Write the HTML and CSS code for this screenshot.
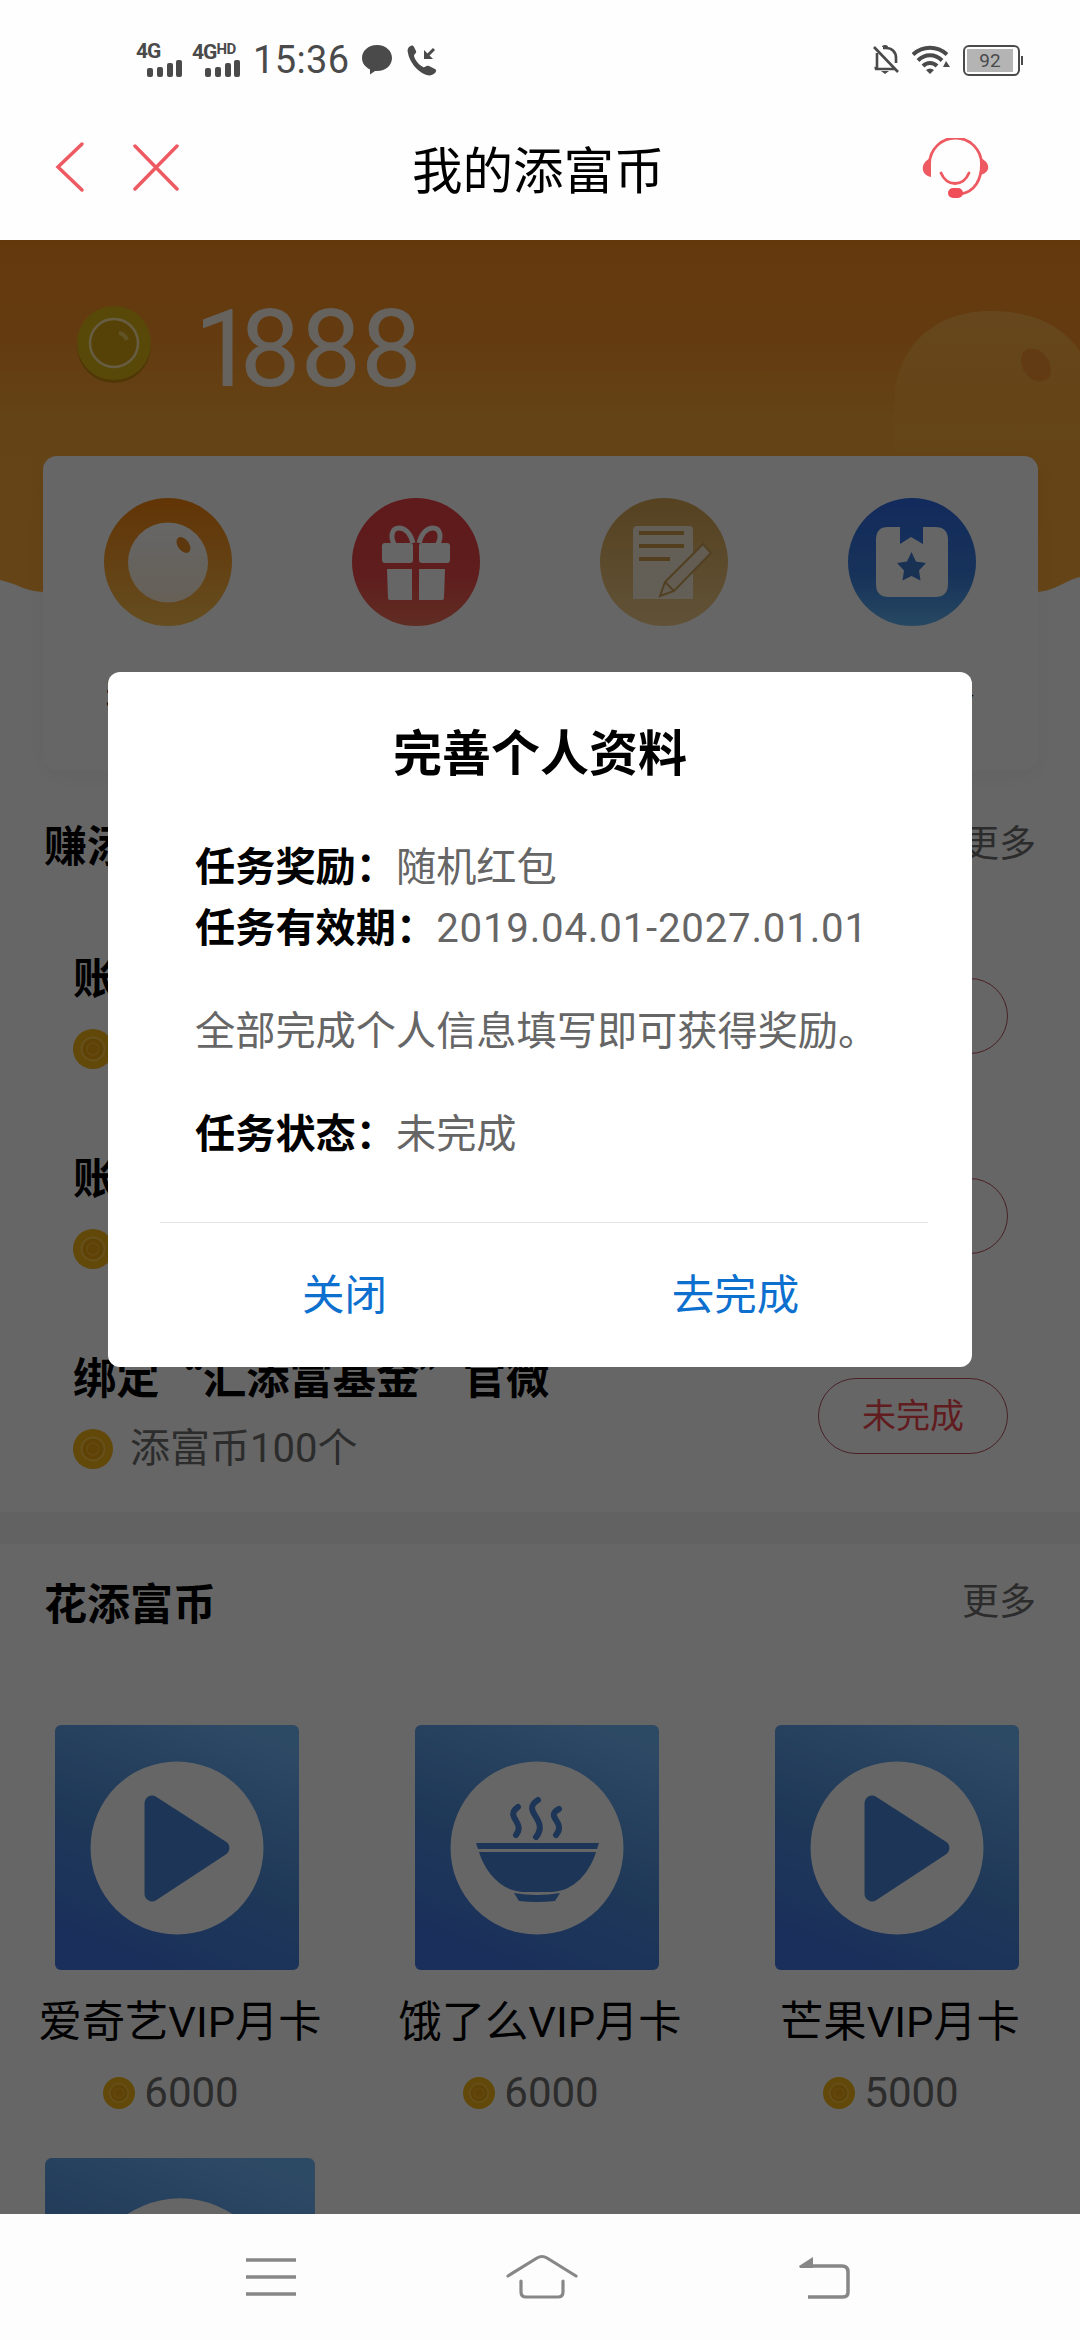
FILE: index.html
```html
<!DOCTYPE html>
<html lang="zh-CN">
<head>
<meta charset="utf-8">
<title>我的添富币</title>
<link rel="stylesheet" href="styles.css">
</head>
<body>
<svg class="defs" width="0" height="0" aria-hidden="true">
  <defs>
    <linearGradient id="tileFill" x1="0.75" y1="0" x2="0.35" y2="1">
      <stop offset="0" stop-color="#72b8fc"/><stop offset="0.5" stop-color="#5090dc"/><stop offset="1" stop-color="#4176e4"/>
    </linearGradient>
    <linearGradient id="orangeFill" x1="0" y1="0" x2="0" y2="1">
      <stop offset="0" stop-color="#f58410"/><stop offset="1" stop-color="#fcc050"/>
    </linearGradient>
    <linearGradient id="redFill" x1="0" y1="0" x2="0" y2="1">
      <stop offset="0" stop-color="#ee4147"/><stop offset="0.6" stop-color="#ee4a49"/><stop offset="1" stop-color="#f0705a"/>
    </linearGradient>
    <linearGradient id="sandFill" x1="0" y1="0" x2="0" y2="1">
      <stop offset="0" stop-color="#d6a552"/><stop offset="1" stop-color="#f2cc8a"/>
    </linearGradient>
    <linearGradient id="blueFill" x1="0" y1="0" x2="0" y2="1">
      <stop offset="0" stop-color="#2f6be6"/><stop offset="0.6" stop-color="#3a7fe0"/><stop offset="1" stop-color="#62b4f5"/>
    </linearGradient>
    <linearGradient id="ballFill" x1="0" y1="0" x2="0" y2="1">
      <stop offset="0" stop-color="#fff"/><stop offset="1" stop-color="#fff0d8"/>
    </linearGradient>
    <linearGradient id="cloudFill" x1="0" y1="0" x2="0" y2="1">
      <stop offset="0" stop-color="#ffb850" stop-opacity="0.85"/><stop offset="0.6" stop-color="#ffb848" stop-opacity="0"/>
    </linearGradient>
    <symbol id="coin" viewBox="0 0 40 40">
      <circle cx="20" cy="20" r="20" fill="#f5b417"/>
      <circle cx="20" cy="20" r="11.5" fill="#eca50f" stroke="#ffc845" stroke-width="2"/>
      <circle cx="20" cy="20" r="6" fill="none" stroke="#f8b92c" stroke-width="1.5"/>
    </symbol>
    <symbol id="play" viewBox="0 0 244 245">
      <rect width="244" height="245" rx="6" fill="url(#tileFill)"/>
      <circle cx="122" cy="123" r="86.5" fill="#fff"/>
      <path d="M97 78 L167 123 L97 169 Z" fill="url(#tileFill)" stroke="#4a86d6" stroke-width="0"/>
      <path d="M97 78 L167 123 L97 169 Z" fill="#4a86d6" stroke="#4a86d6" stroke-width="15" stroke-linejoin="round"/>
    </symbol>
    <symbol id="bowl" viewBox="0 0 244 245">
      <rect width="244" height="245" rx="6" fill="url(#tileFill)"/>
      <circle cx="122" cy="123" r="86.500" fill="#fff"/>
      <g fill="#4a86d6">
        <path d="M61 118h123l-2 6H63z"/>
        <path d="M64 127h117c-6 20-22 39-44 40h-29c-22-1-38-20-44-40z"/>
        <path d="M99 168q23 4 46 0l-5 8q-18 2-36 0z"/>
      </g>
      <g fill="none" stroke="#4a86d6" stroke-width="6" stroke-linecap="round">
        <path d="M103 82c-14 10 8 15-2 28"/>
        <path d="M123 75c-18 11 12 20-2 37"/>
        <path d="M144 84c-15 8 8 13-3 26"/>
      </g>
    </symbol>
  </defs>
</svg>

<div class="phone">
  <header class="status">
    <div class="status-side">
      <div class="net"><b>4G</b><svg width="36" height="17" viewBox="0 0 36 17"><g fill="#4a4a4a"><rect x="0" y="8" width="6" height="9" rx="2"/><rect x="10" y="7" width="6" height="10" rx="2"/><rect x="20" y="3" width="6" height="14" rx="2"/><rect x="29" y="0" width="6" height="17" rx="2"/></g></svg></div>
      <div class="net net-hd"><b>4G<sup>HD</sup></b><svg width="36" height="17" viewBox="0 0 36 17"><g fill="#4a4a4a"><rect x="0" y="8" width="6" height="9" rx="2"/><rect x="10" y="7" width="6" height="10" rx="2"/><rect x="20" y="3" width="6" height="14" rx="2"/><rect x="29" y="0" width="6" height="17" rx="2"/></g></svg></div>
      <span class="clock">15:36</span>
      <svg class="chat" width="30" height="30" viewBox="0 0 30 30"><path d="M15 0c9 0 15 6 15 13s-6 13-15 13h-2l-5 3.500v-5C3 22 0 18 0 13 0 6 6 0 15 0z" fill="#4a4a4a"/></svg>
      <svg class="call" width="31" height="31" viewBox="0 0 31 31"><path d="M2 2c2-2 4-2 5 0l2 4c1 2-2 3-2 5 1 4 5 9 9 11 2 1 3-2 6-1l6 3c2 1 1 3 0 4-3 3-7 3-11 1C10 26 2 16 1 8 0 5 1 3 2 2z" fill="#4a4a4a"/><path d="M27 4l-7 7" fill="none" stroke="#4a4a4a" stroke-width="3"/><path d="M17 5v9h9z" fill="#4a4a4a"/></svg>
    </div>
    <div class="status-side">
      <svg width="27" height="30" viewBox="0 0 27 30"><g fill="none" stroke="#4a4a4a" stroke-width="2.600"><path d="M1 2l24 25"/><path d="M4 8v15H1.500M2 24h20M10 3h3c6 0 10 4 10 10v5"/></g><path d="M8 26h8l-4 3zM9 2a3 2 0 0 1 6 0z" fill="#4a4a4a"/></svg>
      <svg class="wifi" width="38" height="30" viewBox="0 0 38 30"><g fill="none" stroke="#4a4a4a" stroke-width="4"><path d="M1 9.500c10-9 24-9 34 0"/><path d="M6 15.500c7-7 17-7 24 0"/><path d="M11 21c4-4 10-4 14 0"/></g><path d="M14 25q4-3 8 0l-4 4zM34 16l4 6h-7z" fill="#4a4a4a"/></svg>
      <div class="battery"><span>92</span></div>
    </div>
  </header>

  <nav class="titlebar">
    <svg class="back" width="30" height="52" viewBox="0 0 30 52"><path d="M27 3L3 26l24 23" fill="none" stroke="#ee5a62" stroke-width="3.500" stroke-linecap="round"/></svg>
    <svg class="close" width="48" height="48" viewBox="0 0 48 48"><path d="M2 2l42 43M44 2L2 45" fill="none" stroke="#ee5a62" stroke-width="3.500" stroke-linecap="round"/></svg>
    <h1>我的添富币</h1>
    <svg class="service" width="68" height="62" viewBox="0 0 68 62"><g fill="none" stroke="#ee5a62" stroke-width="2.800"><path d="M7.500 26a26 26 0 0 1 52 0c0 16-7 28-21 30"/><path d="M19 35c6 14 22 14 28 0" stroke-linecap="round"/></g><path d="M9 20v19C-2 37-2 24 9 20zM58 20v17c11-2 11-13 0-17z" fill="#ee5a62"/><rect x="26" y="50" width="15" height="10" rx="5" fill="#f04e58"/></svg>
  </nav>

  <main class="page">
    <section class="hero">
      <svg class="hero-bg" width="1080" height="360" viewBox="0 0 1080 360">
        <path d="M895 150C902 100 940 71 990 71s84 20 100 60v229H893z" fill="url(#cloudFill)"/>
        <ellipse cx="1036" cy="125" rx="13" ry="18" fill="#f08228" opacity="0.6" transform="rotate(-35 1036 125)"/>
        <path d="M0 340c16 3 26 12 44 12h990c20 0 30-11 46-15v24H0z" fill="#fff"/>
      </svg>
      <div class="balance">
        <svg width="76" height="78" viewBox="0 0 76 78"><circle cx="37" cy="40" r="37" fill="#c98a10"/><circle cx="37" cy="37" r="37" fill="#dfb615"/><circle cx="37" cy="37" r="24" fill="#d7a412" stroke="#ffe9a8" stroke-width="2.500"/><path d="M42 27q6 1 8 7" fill="none" stroke="#f0cf60" stroke-width="4"/></svg>
        <strong><span class="lead">1</span>888</strong>
      </div>
      <div class="menu-card">
        <div class="menu-item">
          <svg width="128" height="128" viewBox="0 0 128 128"><circle cx="64" cy="64" r="64" fill="url(#orangeFill)"/><circle cx="64" cy="64.500" r="40" fill="url(#ballFill)"/><ellipse cx="79.500" cy="47" rx="5.500" ry="9" fill="#e88a25" transform="rotate(-38 79.500 47)"/></svg>
          <span>我的币</span>
        </div>
        <div class="menu-item">
          <svg width="128" height="128" viewBox="0 0 128 128"><circle cx="64" cy="64" r="64" fill="url(#redFill)"/><g fill="#fff"><rect x="30" y="45" width="31" height="20" rx="3"/><rect x="67" y="45" width="31" height="20" rx="3"/><path d="M35 71h25v31H38q-2 0-2-2zM67 71h26l-1 29q0 2-2 2H67z"/></g><g fill="none" stroke="#fff" stroke-width="5"><path d="M61 45C58 34 52 30 47 30c-7 0-9 8-5 16"/><path d="M67 45c3-11 9-15 14-15 7 0 9 8 5 16"/></g></svg>
          <span>兑好礼</span>
        </div>
        <div class="menu-item">
          <svg width="128" height="128" viewBox="0 0 128 128"><circle cx="64" cy="64" r="64" fill="url(#sandFill)"/><path d="M37 28h52q4 0 4 4v69H33V32q0-4 4-4z" fill="#f7ecd6"/><path d="M39 35h45M39 48h45M39 61h31" stroke="#cf9f4c" stroke-width="4" fill="none"/><path d="M103 46l8 9-37 38-14 5 5-14z" fill="#f7e6cc" stroke="#cba056" stroke-width="2"/><path d="M65 84l9 9" stroke="#cba056" stroke-width="2"/></svg>
          <span>领奖励</span>
        </div>
        <div class="menu-item">
          <svg width="128" height="128" viewBox="0 0 128 128"><circle cx="64" cy="64" r="64" fill="url(#blueFill)"/><path d="M40 29h12v17l11-7 12 7V29h12q13 0 13 13v44q0 13-13 13H41q-13 0-13-13V42q0-13 12-13z" fill="#fff"/><path d="M63.500 54l4.500 9.500 10 1.500-7 7.500 1.500 10-9-4.500-9 4.500 1.500-10-7-7.500 10-1.500z" fill="#3f7bd0"/></svg>
          <span>做任务</span>
        </div>
      </div>
    </section>

    <section class="earn">
      <div class="section-head"><h2>赚添富币</h2><a>更多</a></div>
      <div class="task">
        <div><h3>账户登录</h3><p><svg width="40" height="40"><use href="#coin"/></svg>添富币10个</p></div>
        <span class="pill">未完成</span>
      </div>
      <div class="task">
        <div><h3>账户信息</h3><p><svg width="40" height="40"><use href="#coin"/></svg>添富币50个</p></div>
        <span class="pill">未完成</span>
      </div>
      <div class="task">
        <div><h3>绑定“汇添富基金”官微</h3><p><svg width="40" height="40"><use href="#coin"/></svg>添富币100个</p></div>
        <span class="pill">未完成</span>
      </div>
    </section>

    <section class="spend">
      <div class="section-head"><h2>花添富币</h2><a>更多</a></div>
      <div class="goods">
        <div class="good"><svg width="244" height="245"><use href="#play"/></svg><h4>爱奇艺VIP月卡</h4><p><svg width="32" height="34" viewBox="0 0 40 40"><use href="#coin"/></svg>6000</p></div>
        <div class="good"><svg width="244" height="245"><use href="#bowl"/></svg><h4>饿了么VIP月卡</h4><p><svg width="32" height="34" viewBox="0 0 40 40"><use href="#coin"/></svg>6000</p></div>
        <div class="good"><svg width="244" height="245"><use href="#play"/></svg><h4>芒果VIP月卡</h4><p><svg width="32" height="34" viewBox="0 0 40 40"><use href="#coin"/></svg>5000</p></div>
        <div class="good"><svg class="large" width="270" height="271"><use href="#play"/></svg></div>
      </div>
    </section>

    <div class="mask"></div>
    <div class="dialog">
      <h2>完善个人资料</h2>
      <div class="dialog-body">
        <p><b>任务奖励：</b>随机红包</p>
        <p><b>任务有效期：</b><span class="date">2019.04.01-2027.01.01</span></p>
        <p class="para">全部完成个人信息填写即可获得奖励。</p>
        <p class="para"><b>任务状态：</b>未完成</p>
      </div>
      <div class="dialog-actions"><a>关闭</a><a>去完成</a></div>
    </div>
  </main>

  <footer class="navbar">
    <svg width="50" height="38" viewBox="0 0 50 38"><path d="M0 2h50M0 19h50M0 36h50" stroke="#878787" stroke-width="3.600"/></svg>
    <svg class="home" width="72" height="46" viewBox="0 0 72 46"><g fill="none" stroke="#878787" stroke-width="3.200" stroke-linecap="round"><path d="M2 22L31 4q5-3 10 0l29 18"/><path d="M15 27v11q0 5 5 5h32q5 0 5-5V27"/></g></svg>
    <svg width="52" height="44" viewBox="0 0 52 44"><path d="M6 11h37q6 0 6 6v20q0 5-5 5H9" fill="none" stroke="#878787" stroke-width="3.500"/><path d="M0 11L14 2v11H1z" fill="#878787"/></svg>
  </footer>
</div>
</body>
</html>
```

FILE: styles.css
```css
* { box-sizing: border-box; margin: 0; padding: 0; }

body {
  width: 1080px;
  height: 2340px;
  overflow: hidden;
  background: #fefefe;
  font-family: Roboto, "Noto Sans CJK SC", sans-serif;
  color: #000;
}

svg { display: block; flex: none; }
.defs { position: absolute; }

.phone { display: flex; flex-direction: column; height: 2340px; }

/* status bar */
.status {
  height: 92px;
  padding: 28px 57px 0 136px;
  display: flex;
  justify-content: space-between;
  align-items: center;
  color: #4a4a4a;
}
.status-side { display: flex; align-items: center; }
.net { width: 47px; height: 33px; display: flex; flex-direction: column; align-items: flex-end; }
.net b { align-self: flex-start; height: 16px; font-size: 21px; line-height: 15px; letter-spacing: -1px; white-space: nowrap; }
.net-hd { width: 49px; margin-left: 9px; }
.net sup { font-size: 15px; line-height: 10px; vertical-align: 5px; letter-spacing: -0.5px; }
.clock { margin-left: 12px; font-size: 38px; line-height: 40px; width: 96px; letter-spacing: 0.4px; }
.chat { margin-left: 13px; }
.call { margin-left: 15px; }
.wifi { margin: 0 13px 0 12px; }
.battery {
  width: 57px;
  height: 31px;
  margin-right: 3px;
  padding: 2px 5px 2px 2px;
  border: 2px solid #4a4a4a;
  border-radius: 6px;
  position: relative;
}
.battery span { display: block; height: 23px; background: #b4b4b4; font-size: 19px; line-height: 24px; text-align: center; }
.battery::after { content: ""; position: absolute; right: -5px; top: 9px; width: 2px; height: 9px; background: #4a4a4a; }

/* title bar */
.titlebar { height: 148px; padding: 0 90px 0 55px; display: flex; align-items: center; }
.back { margin-top: 2px; }
.close { margin: 4px 0 0 48px; }
.service { margin-top: 6px; }
.titlebar h1 {
  flex: 1;
  padding-left: 231px;
  font-size: 50.5px;
  font-weight: 400;
  line-height: 60px;
  padding-top: 12px;
}

/* scrolling page */
.page { position: relative; height: 1974px; overflow: hidden; background: #fff; }
.hero { position: relative; height: 530px; background: linear-gradient(#f89020 0, #fa9228 90px, #fbab38 190px, #fcaa3c 352px, #fff 352px); }
.hero-bg { position: absolute; left: 0; top: 0; }
.balance { position: relative; height: 216px; padding: 66px 0 0 77px; display: flex; }
.balance strong { margin: -17px 0 0 41px; color: #fff; opacity: 0.9; font-size: 108px; font-weight: 400; line-height: 120px; }
.balance .lead { letter-spacing: -15px; }
.menu-card {
  position: relative;
  height: 314px;
  margin: 0 42px 0 43px;
  padding: 42px 0 0 1px;
  display: grid;
  grid-template-columns: repeat(4, 248px);
  border-radius: 14px;
  background: #fff;
  box-shadow: 0 6px 24px rgba(0, 0, 0, 0.04);
}
.menu-item { display: flex; flex-direction: column; align-items: center; }
.menu-item span { margin-top: 48px; font-size: 42px; line-height: 50px; }

.earn { padding-bottom: 18px; }
.section-head { height: 90px; padding: 0 44px; display: flex; justify-content: space-between; align-items: center; }
.section-head h2 { font-size: 43px; line-height: 50px; margin-top: 4px; }
.section-head a { color: #6e6e6e; font-size: 37px; line-height: 44px; }
.earn .section-head { padding-top: 26px; height: 124px; }
.task { height: 200px; padding: 0 72px 0 73px; display: flex; justify-content: space-between; align-items: flex-start; }
.task:nth-of-type(n+2) { padding-top: 56px; }
.task h3 { font-family: "Noto Sans CJK SC", sans-serif; font-size: 43.3px; line-height: 50px; }
.task p { margin-top: 24px; display: flex; align-items: center; gap: 17px; color: #6e6e6e; font-size: 40px; line-height: 50px; }
.pill {
  width: 190px;
  height: 76px;
  margin-top: 28px;
  border: 1.5px solid #b8505e;
  border-radius: 38px;
  color: #f2474f;
  font-size: 34px;
  line-height: 74px;
  text-align: center;
}

.spend { border-top: 32px solid #f7f5f5; }
.spend .section-head { height: 118px; }
.goods { display: grid; grid-template-columns: repeat(3, 360px); padding-top: 63px; }
.good { display: flex; flex-direction: column; align-items: center; height: 433px; }
.good > svg { margin-left: -6px; }
.good > .large { margin-left: 0; }
.good h4 { margin-top: 28px; font-size: 43.3px; font-weight: 400; line-height: 50px; }
.good p { margin: 20px 18px 0 0; display: flex; align-items: center; gap: 9px; color: #6e6e6e; font-size: 42px; line-height: 50px; }

/* dialog */
.mask { position: absolute; inset: 0; background: rgba(0, 0, 0, 0.6); }
.dialog {
  position: absolute;
  left: 108px;
  top: 432px;
  width: 864px;
  height: 695px;
  border-radius: 12px;
  background: #fff;
}
.dialog h2 { padding-top: 53px; font-size: 49px; line-height: 60px; text-align: center; }
.dialog-body { height: 386px; margin: 52px 44px 0 52px; padding: 0 0 0 35px; border-bottom: 1px solid #e4e4e4; color: #666; font-size: 40.2px; line-height: 61px; white-space: nowrap; }
.dialog-body b { color: #000; }
.dialog-body .para { margin-top: 42px; }
.date { letter-spacing: 0.8px; }
.dialog-actions { margin: 0 41px; padding-top: 43px; display: flex; }
.dialog-actions a { flex: 1; color: #0d70cf; font-size: 42.5px; line-height: 60px; text-align: center; }

/* system navigation */
.navbar { flex: 1; padding: 0 229px 0 246px; display: flex; justify-content: space-between; align-items: center; background: #fdfdfd; }
.home { margin-right: 12px; }
```
